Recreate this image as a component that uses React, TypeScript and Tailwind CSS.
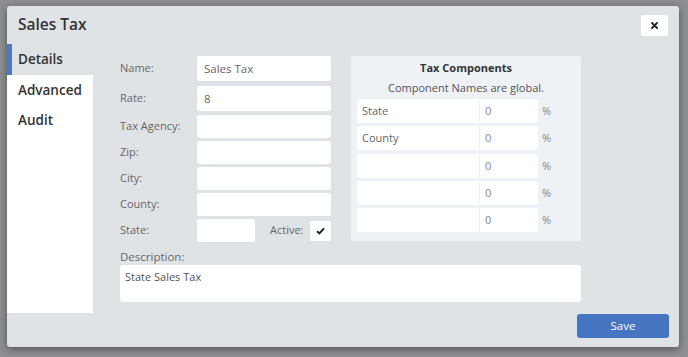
import React from "react";

const font = { fontFamily: '"Open Sans", "Noto Sans", sans-serif' };

function Field({ value = "", w = "w-[134px]", h = "h-[25px]" }: { value?: string; w?: string; h?: string }) {
  return (
    <div className={`${w} ${h} bg-white rounded-[3px] flex items-center px-[7px] text-[11.5px] text-[#666]`}>
      {value}
    </div>
  );
}

function Row({ label, value, h, mt }: { label: string; value?: string; h: string; mt: string }) {
  return (
    <div className={`flex items-center ${mt}`}>
      <div className="w-[77px] text-[11px] text-[#666]">{label}</div>
      <Field value={value} h={h} />
    </div>
  );
}

function CompRow({ name, mt }: { name: string; mt: string }) {
  return (
    <div className={`flex items-center ${mt}`}>
      <div className="w-[122px] h-[24px] bg-white rounded-l-[3px] flex items-center px-[5px] text-[11px] text-[#666]">{name}</div>
      <div className="w-[58px] h-[24px] bg-white rounded-r-[3px] ml-[1px] flex items-center px-[5px] text-[11px] text-[#888]">0</div>
      <div className="ml-[4px] text-[11px] text-[#888]">%</div>
    </div>
  );
}

export default function App() {
  return (
    <div className="w-[688px] h-[357px] bg-[#8e9093] pl-[7px] pt-[6px]" style={font}>
      <div className="w-[672px] h-[341px] bg-[#e0e3e6] rounded-[3px] shadow-[0_2px_8px_rgba(0,0,0,0.45)] flex flex-col overflow-hidden">
        <div className="h-[38px] flex items-start justify-between">
          <div className="ml-[11px] mt-[7px] text-[15.5px] font-semibold text-[#333]">Sales Tax</div>
          <div className="mt-[9px] mr-[11px] w-[27px] h-[21px] bg-white rounded-[2px] flex items-center justify-center">
            <svg width="7" height="7" viewBox="0 0 7 7">
              <path d="M1 1 L6 6 M6 1 L1 6" stroke="#222" strokeWidth="1.8" strokeLinecap="round" />
            </svg>
          </div>
        </div>
        <div className="flex flex-1">
          <div className="w-[86px] flex flex-col">
            <div className="h-[31px] flex items-center border-l-[5px] border-[#4a7ac4] pl-[6px] text-[13.5px] font-semibold text-[#333]">Details</div>
            <div className="h-[238px] bg-white flex flex-col">
              <div className="h-[30px] flex items-center pl-[11px] text-[13.5px] font-semibold text-[#333]">Advanced</div>
              <div className="h-[30px] flex items-center pl-[11px] text-[13.5px] font-semibold text-[#333]">Audit</div>
            </div>
          </div>
          <div className="flex-1 pl-[27px] pt-[12px]">
            <div className="flex">
              <div className="flex flex-col w-[211px]">
                <Row label="Name:" value="Sales Tax" h="h-[25px]" mt="mt-0" />
                <Row label="Rate:" value="8" h="h-[25px]" mt="mt-[5px]" />
                <Row label="Tax Agency:" h="h-[23px]" mt="mt-[4px]" />
                <Row label="Zip:" h="h-[23px]" mt="mt-[3px]" />
                <Row label="City:" h="h-[23px]" mt="mt-[3px]" />
                <Row label="County:" h="h-[23px]" mt="mt-[3px]" />
                <div className="flex items-center mt-[3px]">
                  <div className="w-[77px] text-[11px] text-[#666]">State:</div>
                  <Field w="w-[58px]" h="h-[23px]" />
                  <div className="ml-[15px] w-[40px] text-[11px] text-[#666]">Active:</div>
                  <div className="w-[21px] h-[20px] bg-white rounded-[2px] flex items-center justify-center">
                    <svg width="9" height="8" viewBox="0 0 9 8">
                      <path d="M1 4.2 L3.4 6.4 L8 1.4" stroke="#222" strokeWidth="2" fill="none" />
                    </svg>
                  </div>
                </div>
              </div>
              <div className="ml-[20px] w-[230px] h-[185px] bg-[#eef1f5] rounded-[2px] pl-[6px] flex flex-col">
                <div className="text-center text-[11px] font-bold text-[#333] mt-[4px] pr-[6px]">Tax Components</div>
                <div className="text-center text-[11px] text-[#555] mt-[3px] pr-[6px]">Component Names are global.</div>
                <CompRow name="State" mt="mt-[3px]" />
                <CompRow name="County" mt="mt-[3px]" />
                <CompRow name="" mt="mt-[4px]" />
                <CompRow name="" mt="mt-[3px]" />
                <CompRow name="" mt="mt-[3px]" />
              </div>
            </div>
            <div className="mt-[8px] text-[11.5px] text-[#666] leading-[14px]">Description:</div>
            <div className="mt-[1px] w-[461px] h-[37px] bg-white rounded-[3px] px-[5px] pt-[4px] text-[11px] text-[#555]">State Sales Tax</div>
            <div className="flex justify-end w-[549px] mt-[12px]">
              <div className="w-[92px] h-[24px] bg-[#4676c2] rounded-[3px] flex items-center justify-center text-white text-[11.5px]">Save</div>
            </div>
          </div>
        </div>
      </div>
    </div>
  );
}
